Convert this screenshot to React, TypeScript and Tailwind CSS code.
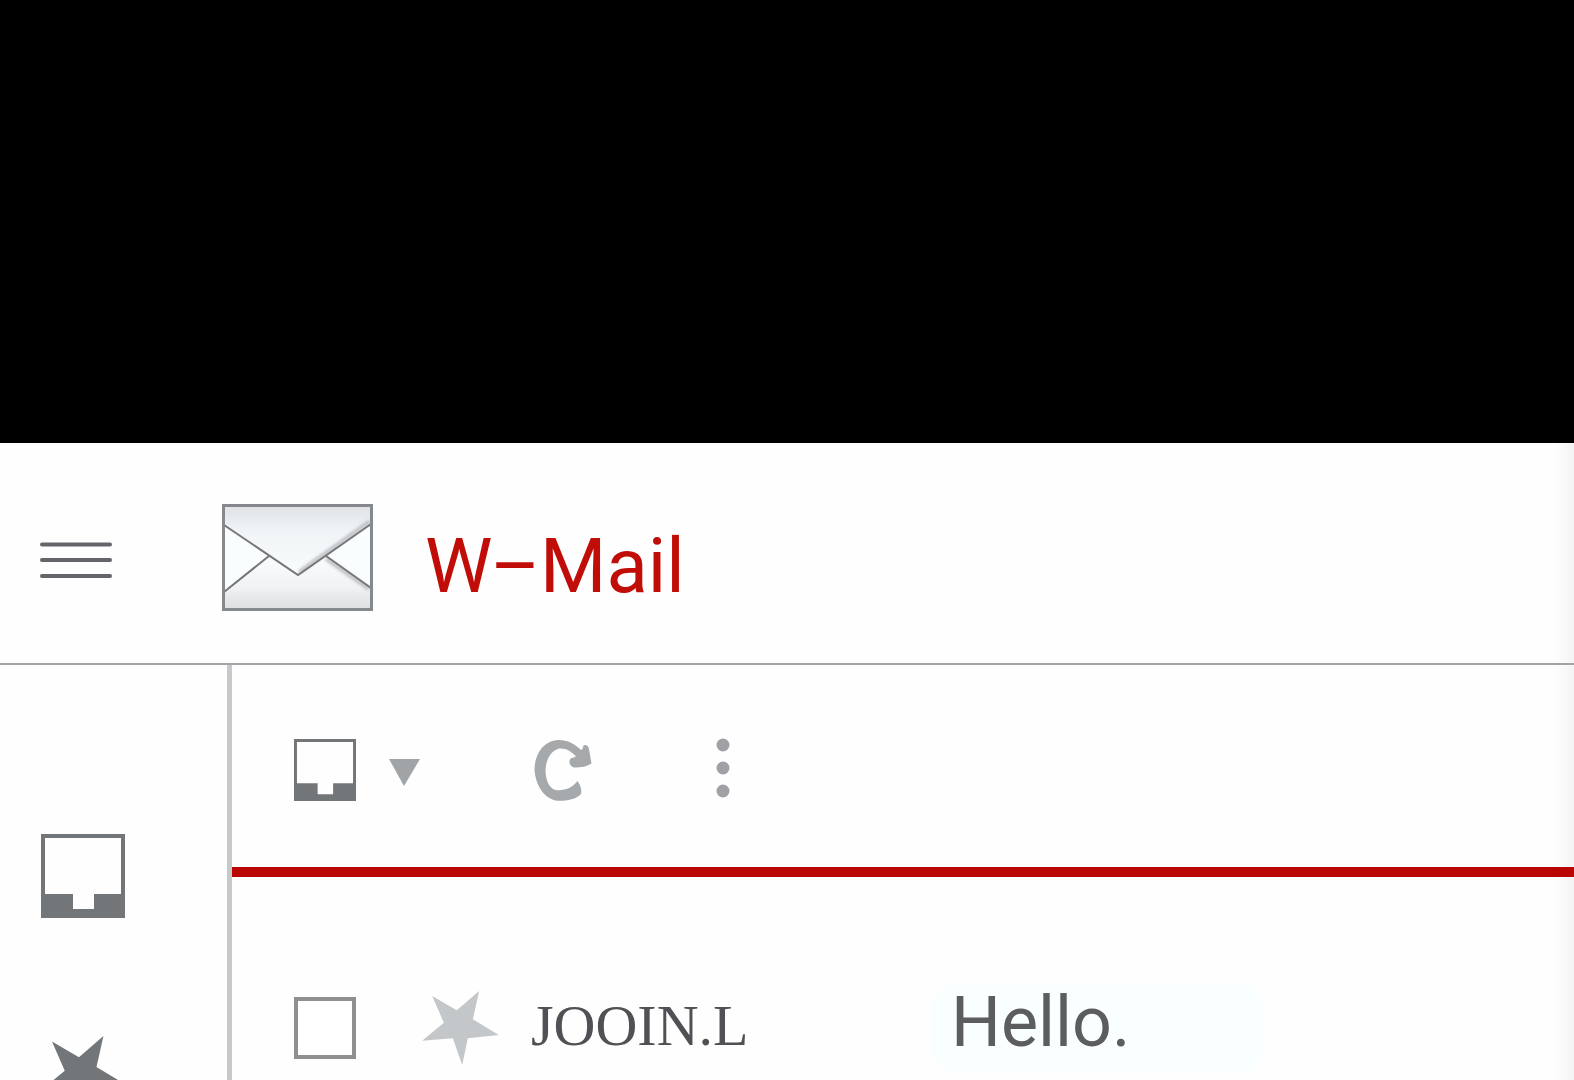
import React from "react";

interface IconProps {
  className?: string;
}

function MenuIcon({ className }: IconProps) {
  return (
    <svg viewBox="0 0 72 36" className={className} fill="none" stroke="#64656b" strokeWidth="4" strokeLinecap="round" aria-hidden="true">
      <path d="M2 2.5h68M2 18h68M2 34h68" />
    </svg>
  );
}

function EnvelopeIcon({ className }: IconProps) {
  return (
    <svg viewBox="0 0 151 107" className={className} fill="none" aria-hidden="true">
      <defs>
        <linearGradient id="flap" x1="0" y1="0" x2="0" y2="1">
          <stop offset="0" stopColor="#e0e2e4" />
          <stop offset="0.35" stopColor="#f0f4f6" />
          <stop offset="1" stopColor="#f8fcfd" />
        </linearGradient>
        <linearGradient id="pocket" x1="0" y1="0" x2="0" y2="1">
          <stop offset="0" stopColor="#fafcfd" />
          <stop offset="0.6" stopColor="#f0f2f4" />
          <stop offset="1" stopColor="#dddee0" />
        </linearGradient>
        <filter id="soft">
          <feGaussianBlur stdDeviation="1.5" />
        </filter>
      </defs>
      <path d="M2 2h147v103H2z" fill="#fafdfe" />
      <path d="M2 88L47 52l29 19 29-19 44 32v21H2z" fill="url(#pocket)" />
      <path d="M2 2h147v18L76 71 2 21z" fill="url(#flap)" />
      <path d="M77 68l71-51M104 55l43 30" stroke="#b4b7bb" strokeWidth="3" filter="url(#soft)" />
      <path d="M2 21l74 50 73-51M2 88l45-36M104 52l45 32" stroke="#74767a" strokeWidth="2" />
      <path d="M1.5 1.5h148v104H1.5z" stroke="#85888c" strokeWidth="3" />
    </svg>
  );
}

function InboxIcon({ className }: IconProps) {
  return (
    <svg viewBox="0 0 84 84" className={className} fill="#737679" aria-hidden="true">
      <path fillRule="evenodd" d="M0 0h84v84H0zM4 4v56h28v15h21V60h27V4z" />
    </svg>
  );
}

function StarIcon({ className }: IconProps) {
  return (
    <svg viewBox="456 70 230 222" className={className} fill="currentColor" aria-hidden="true">
      <path d="M486 85L560 128L627 70L608 155L686 202L593 212L576 292L548 212L456 219L521 165Z" />
    </svg>
  );
}

function RefreshIcon({ className }: IconProps) {
  return (
    <svg viewBox="72 62 172 182" className={className} fill="#a5a9ab" aria-hidden="true">
      <path d="M212 92C219 90 216 80 222 77C230 75 235 82 236 92L243 132C226 142 206 145 190 144C178 140 174 128 180 118C186 114 194 116 196 110C180 92 160 84 144 88C118 96 104 130 106 158C108 190 122 214 146 212C168 210 186 204 201 184C212 198 214 212 212 222C196 240 166 244 140 243C104 238 76 200 73 150C74 104 100 64 144 62C172 62 194 74 212 92Z" />
    </svg>
  );
}

function MoreIcon({ className }: IconProps) {
  return (
    <svg viewBox="0 0 14 60" className={className} fill="#a0a1a4" aria-hidden="true">
      <circle cx="7" cy="7" r="6.5" />
      <circle cx="7" cy="30" r="6.5" />
      <circle cx="7" cy="53" r="6.5" />
    </svg>
  );
}

function Header() {
  return (
    <header className="flex items-center border-b-2 border-[#a3a4aa] pt-[61px] pb-[52px] pl-10">
      <button type="button" aria-label="Menu" className="mt-1">
        <MenuIcon className="h-9 w-[72px]" />
      </button>
      <EnvelopeIcon className="ml-[110px] h-[107px] w-[151px]" />
      <h1 className="ml-[52px] pt-4 font-[Roboto,sans-serif] text-[76px] leading-[80px] text-[#c00d08]">
        W–Mail
      </h1>
    </header>
  );
}

function Sidebar() {
  return (
    <nav className="flex w-[232px] shrink-0 flex-col items-start gap-[118px] border-r-5 border-[#c5c9cc] pt-[169px] pl-[41px]">
      <button type="button" aria-label="Inbox">
        <InboxIcon className="size-[84px]" />
      </button>
      <button type="button" aria-label="Starred" className="text-[#737679]">
        <StarIcon className="h-[81px] w-[84px]" />
      </button>
    </nav>
  );
}

function Toolbar() {
  return (
    <div className="flex items-center border-b-10 border-[#b90602] pt-[73px] pb-[65px] pl-[62px]">
      <button type="button" aria-label="Select">
        <InboxIcon className="size-[62px]" />
      </button>
      <button type="button" aria-label="Select options" className="mt-1 ml-[33px]">
        <svg viewBox="0 0 31 27" className="h-[27px] w-[31px]" fill="#a0a4a7" aria-hidden="true">
          <path d="M0 0h31L15 27z" />
        </svg>
      </button>
      <button type="button" aria-label="Refresh" className="ml-[114px]">
        <RefreshIcon className="h-[61px] w-[58px]" />
      </button>
      <button type="button" aria-label="More" className="mb-1 ml-[124px]">
        <MoreIcon className="h-[60px] w-[14px]" />
      </button>
    </div>
  );
}

interface Mail {
  sender: string;
  subject: string;
}

const mails: Mail[] = [{ sender: "JOOIN.L", subject: "Hello." }];

function MailRow({ sender, subject }: Mail) {
  return (
    <li className="flex items-center pl-[62px]">
      <input
        type="checkbox"
        aria-label={`Select mail from ${sender}`}
        className="size-[62px] shrink-0 appearance-none border-4 border-[#8d8f91] bg-white checked:bg-[#8d8f91]"
      />
      <button type="button" aria-label="Star" className="ml-[66px] shrink-0 text-[#c3c7c9]">
        <StarIcon className="h-[74px] w-[77px]" />
      </button>
      <span className="ml-8 w-[400px] shrink-0 pb-1 font-['Liberation_Serif',serif] text-[58px] leading-[80px] text-[#505154]">
        {sender}
      </span>
      <a
        href="#hello"
        className="w-[332px] rounded-3xl bg-[#f9feff] pb-3 pl-5 font-[Roboto,sans-serif] text-[70px] leading-[76px] text-[#5b5d5f]"
      >
        {subject}
      </a>
    </li>
  );
}

export default function App() {
  return (
    <div className="flex h-screen flex-col overflow-hidden bg-black pt-[443px]">
      <div className="flex flex-1 flex-col bg-[linear-gradient(to_left,#f4f4f4,#fefefe_20px)]">
        <Header />
        <div className="flex flex-1">
          <Sidebar />
          <main className="min-w-0 flex-1">
            <Toolbar />
            <ul className="pt-[107px]">
              {mails.map(mail => (
                <MailRow key={mail.sender} {...mail} />
              ))}
            </ul>
          </main>
        </div>
      </div>
    </div>
  );
}
